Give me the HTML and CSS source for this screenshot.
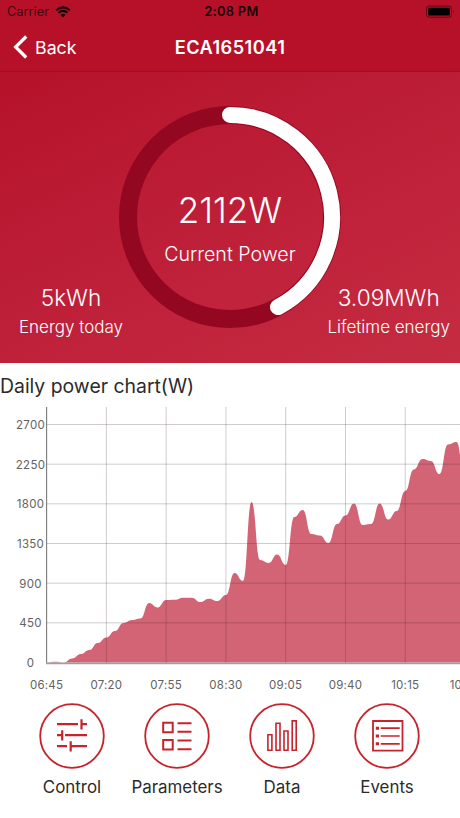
FILE: index.html
```html
<!DOCTYPE html>
<html lang="en">

<head>
    <meta charset="UTF-8">
    <meta name="viewport" content="width=device-width, initial-scale=1.0">
    <title>ECA1651041</title>
    <link rel="stylesheet" href="styles.css">
</head>

<body>
    <header class="header">
        <div class="status-bar">
            <div class="carrier">
                <span>Carrier</span>
                <svg width="16" height="12" viewBox="0 0 16 12">
                    <path d="M8 11.6L5.4 8.8Q8 6.8 10.6 8.8Z" fill="#160408"/>
                    <path d="M3.4 6.8Q8 3 12.6 6.8M1.1 4.2Q8 -1.4 14.9 4.2" fill="none" stroke="#160408" stroke-width="2.1"/>
                </svg>
            </div>
            <span class="time">2:08 PM</span>
            <svg class="battery" width="30" height="14" viewBox="0 0 30 14">
                <rect x="0.5" y="1" width="25" height="11.2" rx="2.8" fill="none" stroke="#5c0815" stroke-width="1"/>
                <rect x="2.2" y="2.7" width="21.6" height="7.8" rx="1" fill="#000"/>
                <path d="M27 4.7Q28.6 6.6 27 8.5Z" fill="#5c0815"/>
            </svg>
        </div>
        <nav class="nav">
            <a class="back">
                <svg width="16" height="26" viewBox="0 0 16 26">
                    <path d="M13.2 2.5L2.6 13L13.2 23.5" fill="none" stroke="#fff" stroke-width="3.2"/>
                </svg>
                <span>Back</span>
            </a>
            <h1 class="title">ECA1651041</h1>
        </nav>
    </header>

    <section class="summary">
        <svg class="ring" width="224" height="224" viewBox="0 0 224 224">
            <circle cx="112" cy="112" r="102" fill="none" stroke="#930720" stroke-width="18"/>
            <path d="M112 9.9A102.1 102.1 0 0 1 160 202.1" fill="none" stroke="#fff" stroke-width="16" stroke-linecap="round"/>
        </svg>
        <div class="power">
            <div class="power-value">2112W</div>
            <div class="power-label">Current Power</div>
        </div>
        <div class="stats">
            <div class="stat today">
                <div class="stat-value">5kWh</div>
                <div class="stat-label">Energy today</div>
            </div>
            <div class="stat lifetime">
                <div class="stat-value">3.09MWh</div>
                <div class="stat-label">Lifetime energy</div>
            </div>
        </div>
    </section>

    <section class="chart-section">
        <h2 class="chart-title">Daily power chart(W)</h2>
        <svg class="chart" width="460" height="291" viewBox="0 404 460 291">
            <path id="area" class="area"/>
            <g id="grid"></g>
            <path class="axis" d="M46.6 407V664"/>
            <path class="axis-x" d="M46 663.4H460"/>
            <g id="labels" class="labels"></g>
        </svg>
    </section>

    <footer class="menu">
        <a class="menu-item">
            <svg class="icon" width="66" height="66" viewBox="0 0 66 66">
                <circle cx="33" cy="33" r="31.8" stroke-width="1.8"/>
                <path d="M18 21.2H39M42.5 21.2H48M42.5 16.3V26.5M18 32.2H22.5M26 32.2H48M23.2 27.2V37.5M18 43.2H28M32 43.2H48M31.7 38.2V48.5" stroke-width="2.2"/>
            </svg>
            <span>Control</span>
        </a>
        <a class="menu-item">
            <svg class="icon" width="66" height="66" viewBox="0 0 66 66">
                <circle cx="33" cy="33" r="31.8" stroke-width="1.8"/>
                <path d="M19.2 19.7H28.7V29.2H19.2ZM19.2 37H28.7V46.5H19.2ZM33.5 20.2H47.5M33.5 28.7H47.5M33.5 37.5H47.5M33.5 46.2H47.5" stroke-width="2"/>
            </svg>
            <span>Parameters</span>
        </a>
        <a class="menu-item">
            <svg class="icon" width="66" height="66" viewBox="0 0 66 66">
                <circle cx="33" cy="33" r="31.8" stroke-width="1.8"/>
                <path d="M18.9 31.7H22.9V47.2H18.9ZM27 20.2H31V47.2H27ZM35 28H39V47.2H35ZM43.2 17.9H47.2V47.2H43.2Z" stroke-width="1.6"/>
            </svg>
            <span>Data</span>
        </a>
        <a class="menu-item">
            <svg class="icon" width="66" height="66" viewBox="0 0 66 66">
                <circle cx="33" cy="33" r="31.8" stroke-width="1.8"/>
                <path d="M19 18H48.5V47.7H19Z" stroke-width="1.8"/>
                <path d="M26.7 25.2H45.7M26.7 33H45.7M26.7 40.8H45.7" stroke-width="1.7"/>
                <path d="M21.8 25.2H25M21.8 33H25M21.8 40.8H25" stroke-width="3"/>
            </svg>
            <span>Events</span>
        </a>
    </footer>

    <script src="chart.js"></script>
</body>

</html>
```
FILE: styles.css
```css
body {
    margin: 0;
    width: 460px;
    height: 818px;
    overflow: hidden;
    background-color: #fff;
    font-family: Inter, "Liberation Sans", sans-serif;
    color: #2b2b2b;
}

.header {
    height: 71px;
    background-color: #b71129;
    border-bottom: 1px solid #9f0f24;
}

.status-bar {
    display: grid;
    grid-template-columns: 1fr auto 1fr;
    align-items: center;
    height: 23px;
    padding: 0 4px 0 7px;
    font-size: 12.8px;
    color: #160408;
}

.carrier {
    display: flex;
    align-items: center;
    gap: 6px;
}

.carrier span {
    color: #42070f;
}

.time {
    font-weight: 600;
    letter-spacing: 0.3px;
}

.battery {
    justify-self: end;
}

.nav {
    display: grid;
    grid-template-columns: 1fr auto 1fr;
    align-items: center;
    height: 48px;
    padding: 0 13px;
    color: #fff;
}

.back {
    display: flex;
    align-items: center;
    gap: 6px;
    font-size: 17.8px;
}

.title {
    margin: 0;
    font-size: 18.2px;
    font-weight: 600;
    letter-spacing: 0.45px;
}

.summary {
    display: grid;
    height: 291px;
    background: linear-gradient(155deg, #b5122a 0%, #bd1e37 45%, #c52c42 100%);
    color: #fff;
}

.ring,
.power,
.stats {
    grid-area: 1 / 1;
}

.ring {
    justify-self: center;
    margin-top: 33px;
}

.power {
    margin-top: 116px;
    text-align: center;
}

.power-value {
    font-size: 35px;
    font-weight: 300;
    line-height: 44px;
}

.power-label {
    margin-top: 9px;
    font-size: 19.6px;
    line-height: 26px;
    font-weight: 350;
}

.stats {
    display: flex;
    justify-content: space-between;
    align-self: end;
    padding: 0 10px 22px 19px;
    text-align: center;
}

.stat-value {
    font-size: 22.6px;
    font-weight: 350;
    line-height: 30px;
    margin-bottom: 1px;
}

.stat-label {
    font-size: 17px;
    font-weight: 350;
    line-height: 27px;
}

.chart-title {
    margin: 0;
    height: 41px;
    line-height: 46px;
    font-size: 19.4px;
    font-weight: 400;
}

.chart {
    display: block;
}

.area {
    fill: #d26475;
}

.grid-line {
    stroke: rgba(60, 40, 45, 0.24);
    stroke-width: 1;
}

.axis {
    stroke: #7b7b7b;
    stroke-width: 1.1;
}

.axis-x {
    stroke: #a39a9c;
    stroke-width: 1.8;
}

.labels {
    font-size: 11.5px;
    fill: #626262;
    text-anchor: middle;
    letter-spacing: 0.25px;
}

.menu {
    display: flex;
    padding: 8px 0 0 19.5px;
}

.menu-item {
    display: flex;
    flex-direction: column;
    align-items: center;
    width: 105px;
    font-size: 16.9px;
    line-height: 24px;
}

.icon {
    margin-bottom: 6px;
    fill: none;
    stroke: #c6242c;
}
```
FILE: chart.js
```javascript
// watts, one reading every 5 minutes from 06:45
let readings = [0, 8, 0, 45, 96, 142, 221, 284, 357, 448, 482, 499, 675, 624, 709, 712, 735, 735, 686, 724,
    698, 766, 1015, 925, 1820, 1163, 1129, 1225, 1106, 1650, 1730, 1458, 1441, 1356, 1571, 1668, 1804, 1560,
    1571, 1804, 1622, 1719, 1945, 2189, 2308, 2286, 2138, 2473, 2501, 2040];
let times = ["06:45", "07:20", "07:55", "08:30", "09:05", "09:40", "10:15", "10:50"];
let left = 46.6;
let bottom = 662.5;
let step = 8.54;
let scale = 0.08815;

function px(i) {
    return left + i * step;
}

function py(value) {
    return bottom - value * scale;
}

function drawArea() {
    let d = "M" + left + " " + bottom;
    for (let i = 1; i < readings.length; i++) {
        let mid = (px(i - 1) + px(i)) / 2;
        d += "C" + mid + " " + py(readings[i - 1]) + " " + mid + " " + py(readings[i]) + " " + px(i) + " " + py(readings[i]);
    }
    d += "V" + bottom + "Z";
    document.getElementById("area").setAttribute("d", d);
}

function drawGrid() {
    let lines = "";
    let labels = "";
    for (let value = 0; value <= 2700; value += 450) {
        let y = py(value);
        if (value > 0) {
            lines += `<path class="grid-line" d="M46 ${y}H460"/>`;
        }
        labels += `<text x="30.5" y="${y + 4.4}">${value}</text>`;
    }
    for (let i = 0; i < times.length; i++) {
        let x = px(i * 7);
        if (i > 0) {
            lines += `<path class="grid-line" d="M${x} 407V663"/>`;
        }
        labels += `<text x="${x}" y="689">${times[i]}</text>`;
    }
    document.getElementById("grid").innerHTML = lines;
    document.getElementById("labels").innerHTML = labels;
}

drawArea();
drawGrid();
```
